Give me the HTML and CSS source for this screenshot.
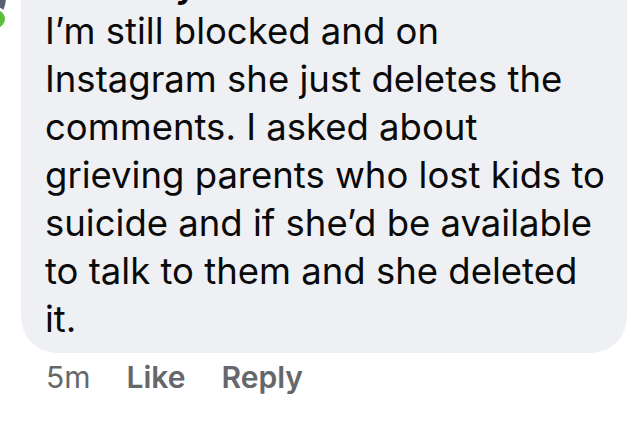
FILE: index.html
```html
<!DOCTYPE html>
<html lang="en">
<head>
<meta charset="utf-8">
<link rel="stylesheet" href="styles.css">
</head>
<body>
<div class="comment">
  <div class="avatar-col">
    <div class="avatar"><span class="status"></span></div>
  </div>
  <div class="content">
    <div class="bubble">
      <div class="author">Kimberly Ross</div>
      <p class="text">I’m still blocked and on Instagram she just deletes the comments. I asked about grieving parents who lost kids to suicide and if she’d be available to talk to them and she deleted it.</p>
    </div>
    <div class="meta">
      <span class="time">5m</span>
      <span class="action">Like</span>
      <span class="action">Reply</span>
    </div>
  </div>
</div>
</body>
</html>
```
FILE: styles.css
```css
html, body {
  margin: 0;
  padding: 0;
  background: #ffffff;
  overflow: hidden;
}
body {
  width: 637px;
  height: 424px;
  font-family: Inter, "Noto Sans", "Liberation Sans", sans-serif;
}
.comment {
  display: flex;
  align-items: flex-start;
  gap: 15px;
  margin-left: -60px;
  margin-top: -41px;
}
.avatar-col {
  flex: none;
  width: 66px;
  padding-top: 5px;
}
.avatar {
  position: relative;
  width: 66px;
  height: 66px;
  border-radius: 50%;
  background: #59606e;
}
.status {
  position: absolute;
  right: -2px;
  bottom: -1px;
  width: 18px;
  height: 18px;
  border-radius: 50%;
  background: #5bbf3e;
  border: 3px solid #ffffff;
}
.content {
  flex: none;
  width: 606px;
}
.bubble {
  background: #eff0f4;
  border-radius: 36px;
  padding: 6px 16px 10px 24px;
}
.author {
  font-weight: 700;
  font-size: 34px;
  line-height: 42px;
  color: #050505;
}
.text {
  margin: 0;
  font-size: 36.5px;
  line-height: 48px;
  color: #0a0a0a;
}
.meta {
  display: flex;
  gap: 36px;
  padding: 4px 0 0 25px;
  font-size: 30px;
  line-height: 40px;
  color: #65676b;
}
.action {
  font-weight: 600;
}
```
